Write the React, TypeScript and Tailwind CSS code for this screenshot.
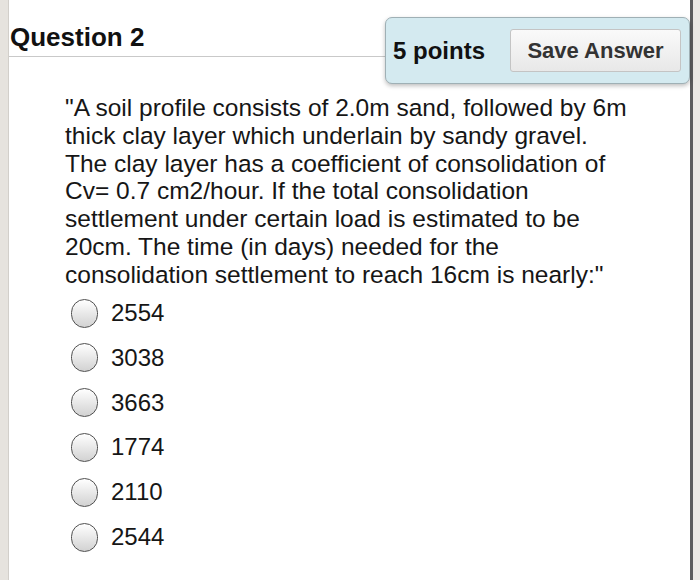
const options = ["2554", "3038", "3663", "1774", "2110", "2544"]

const lines = [
  "\"A soil profile consists of 2.0m sand, followed by 6m",
  "thick clay layer which underlain by sandy gravel.",
  "The clay layer has a coefficient of consolidation of",
  "Cv= 0.7 cm2/hour. If the total consolidation",
  "settlement under certain load is estimated to be",
  "20cm. The time (in days) needed for the",
  "consolidation settlement to reach 16cm is nearly:\"",
]

function Radio() {
  return (
    <span className="block w-[27px] h-[29px] shrink-0 rounded-full border-[1.5px] border-[#505050] bg-gradient-to-b from-white to-[#d2d2d2]" />
  )
}

export default function App() {
  return (
    <div
      className="w-[700px] h-[580px] flex bg-[#ebe8e3] overflow-hidden"
      style={{ fontFamily: "Helvetica, 'Liberation Sans', Arial, sans-serif" }}
    >
      {/* left rail */}
      <div className="w-[9px] shrink-0 bg-[#e6e3de] border-r border-[#d2cfca]" />

      {/* page */}
      <div className="relative flex-1 bg-white">
        {/* header */}
        <div className="h-[57px] pl-[1px] pt-[22px] border-b border-[#c9c9c9]">
          <h2 className="text-[26px] leading-[30px] font-bold text-[#111]">Question 2</h2>
        </div>

        {/* points box */}
        <div className="absolute top-[17px] right-0 w-[305px] h-[67px] flex items-center justify-between pl-[7px] pr-[8px] bg-[#d4eaf0] border border-[#9fb0b5] rounded-[7px] shadow-[0_2px_4px_rgba(0,0,0,0.25)]">
          <span className="text-[24px] font-bold text-[#111]">5 points</span>
          <button className="w-[171px] h-[43px] rounded-[3px] border border-[#c4c4c4] bg-gradient-to-b from-[#fafafa] to-[#e8e8e8] text-[22px] font-bold text-[#333]">
            Save Answer
          </button>
        </div>

        {/* question */}
        <div className="pl-[56px] pt-[37px] text-[24.5px] leading-[27.8px] text-[#161616]">
          {lines.map((l, i) => (
            <div key={i} className="whitespace-nowrap">{l}</div>
          ))}
        </div>

        {/* answers */}
        <div className="pl-[62px] pt-[10px] flex flex-col gap-[15.8px]">
          {options.map((o) => (
            <label key={o} className="flex items-center gap-[13px] h-[29px]">
              <Radio />
              <span className="text-[24px] text-[#161616]">{o}</span>
            </label>
          ))}
        </div>
      </div>

      {/* right edge */}
      <div className="w-[3px] shrink-0 bg-[#5c5c5c]" />
      <div className="w-[7px] shrink-0 bg-[#ebe8e3]" />
    </div>
  )
}
